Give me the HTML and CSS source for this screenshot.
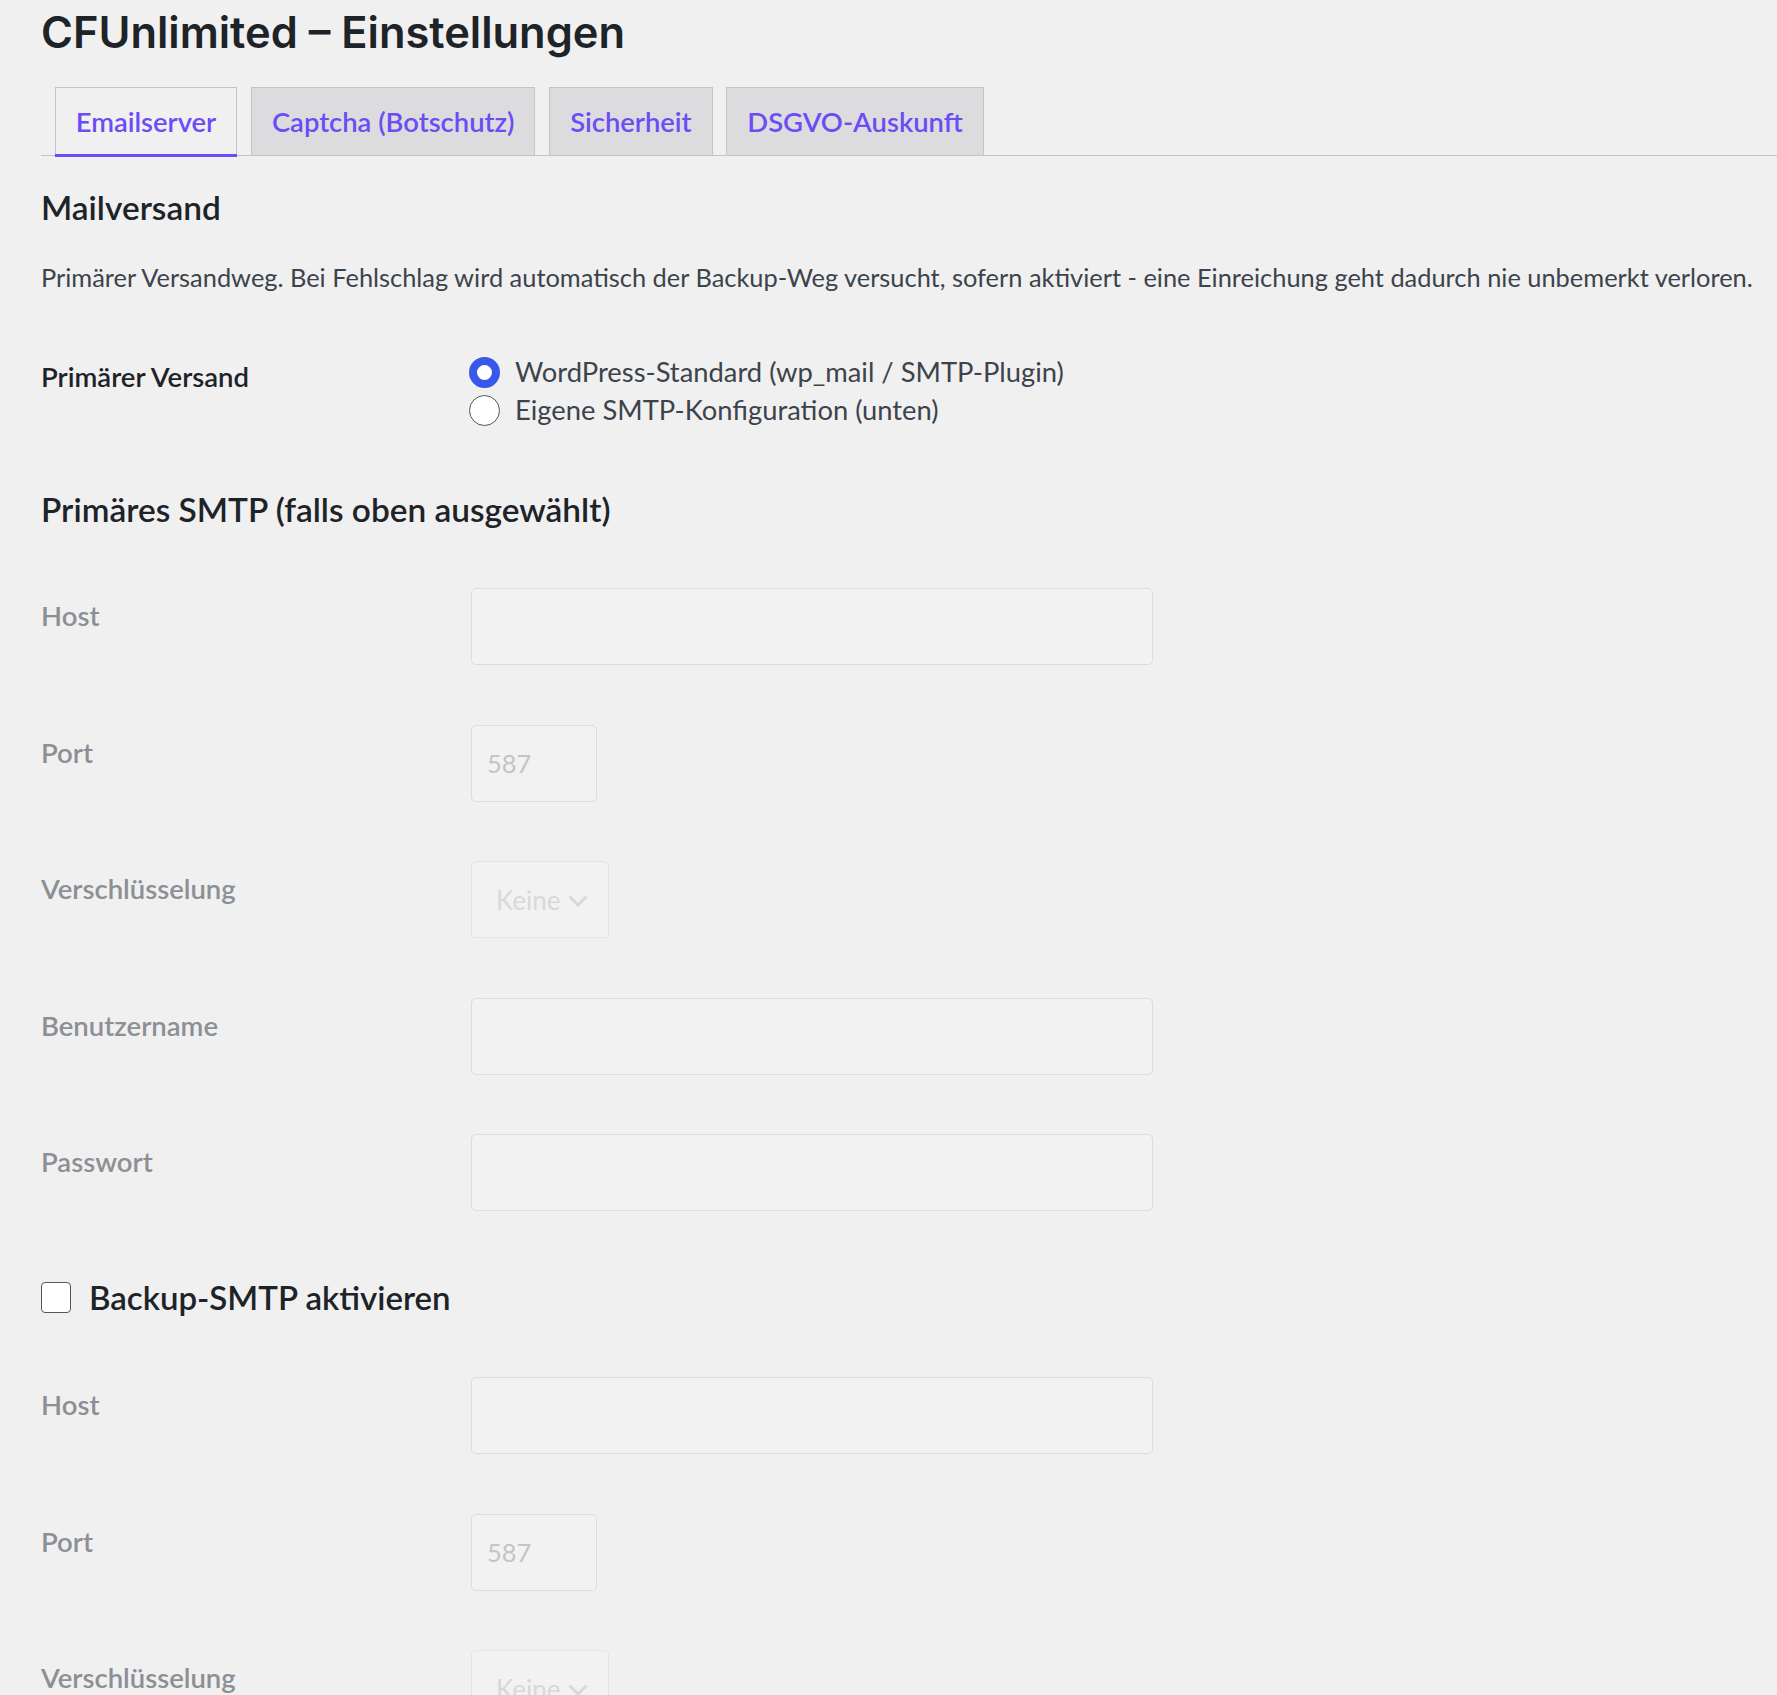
FILE: index.html
```html
<!DOCTYPE html>
<html lang="de">
  <head>
    <meta charset="UTF-8" />
    <meta name="viewport" content="width=device-width, initial-scale=1.0" />
    <title>CFUnlimited – Einstellungen</title>
    <link rel="stylesheet" href="styles.css">
  </head>
  <body>
    <div class="wrap">
      <h1 class="page-title">CFUnlimited – Einstellungen</h1>

      <nav class="nav-tabs">
        <a href="#" class="nav-tab active">Emailserver</a>
        <a href="#" class="nav-tab">Captcha (Botschutz)</a>
        <a href="#" class="nav-tab">Sicherheit</a>
        <a href="#" class="nav-tab">DSGVO-Auskunft</a>
      </nav>

      <h2 class="section-title first">Mailversand</h2>
      <p class="description">Primärer Versandweg. Bei Fehlschlag wird automatisch der Backup-Weg versucht, sofern aktiviert - eine Einreichung geht dadurch nie unbemerkt verloren.</p>

      <div class="form-table">
        <div class="row row-radio">
          <div class="label">Primärer Versand</div>
          <fieldset class="radios">
            <label><input type="radio" name="mode" checked> WordPress-Standard (wp_mail / SMTP-Plugin)</label>
            <label><input type="radio" name="mode"> Eigene SMTP-Konfiguration (unten)</label>
          </fieldset>
        </div>
      </div>

      <h2 class="section-title">Primäres SMTP (falls oben ausgewählt)</h2>

      <div class="form-table disabled smtp-primary">
        <div class="row">
          <label class="label">Host</label>
          <div class="field"><input type="text" class="regular-text" disabled></div>
        </div>
        <div class="row">
          <label class="label">Port</label>
          <div class="field"><input type="text" class="small-text" placeholder="587" disabled></div>
        </div>
        <div class="row">
          <label class="label">Verschlüsselung</label>
          <div class="field">
            <div class="select">
              <select disabled><option>Keine</option></select>
              <svg class="chevron" viewBox="0 0 20 12" width="20" height="12"><path d="M1.5 1.5 L10 10 L18.5 1.5" fill="none" stroke="currentColor" stroke-width="3"/></svg>
            </div>
          </div>
        </div>
        <div class="row">
          <label class="label">Benutzername</label>
          <div class="field"><input type="text" class="regular-text" disabled></div>
        </div>
        <div class="row">
          <label class="label">Passwort</label>
          <div class="field"><input type="password" class="regular-text" disabled></div>
        </div>
      </div>

      <label class="backup-toggle"><input type="checkbox"> Backup-SMTP aktivieren</label>

      <div class="form-table disabled smtp-backup">
        <div class="row">
          <label class="label">Host</label>
          <div class="field"><input type="text" class="regular-text" disabled></div>
        </div>
        <div class="row">
          <label class="label">Port</label>
          <div class="field"><input type="text" class="small-text" placeholder="587" disabled></div>
        </div>
        <div class="row">
          <label class="label">Verschlüsselung</label>
          <div class="field">
            <div class="select">
              <select disabled><option>Keine</option></select>
              <svg class="chevron" viewBox="0 0 20 12" width="20" height="12"><path d="M1.5 1.5 L10 10 L18.5 1.5" fill="none" stroke="currentColor" stroke-width="3"/></svg>
            </div>
          </div>
        </div>
      </div>
    </div>
  </body>
</html>
```
FILE: styles.css
```css
* {
  box-sizing: border-box;
}
html,
body {
  margin: 0;
  padding: 0;
  background-color: #f0f0f1;
}
body {
  color: #3c434a;
  font-family: Lato, "Open Sans", sans-serif;
  font-size: 25.4px;
}
.wrap {
  padding-left: 41px;
}
.page-title {
  margin: 0;
  padding-top: 4px;
  font-family: Inter, sans-serif;
  font-weight: 600;
  font-size: 43.4px;
  line-height: 56px;
  color: #1d2327;
}

/* tabs */
.nav-tabs {
  display: flex;
  align-items: flex-end;
  margin-top: 27px;
  border-bottom: 1px solid #c3c4c7;
}
.nav-tab {
  position: relative;
  margin-left: 13.7px;
  margin-bottom: -1px;
  padding: 9px 20px;
  border: 1px solid #c3c4c7;
  background-color: #dcdcde;
  color: #6b4cf6;
  font-size: 27.4px;
  font-weight: 600;
  line-height: 49px;
  text-decoration: none;
  white-space: nowrap;
}
.nav-tab.active {
  background-color: #f0f0f1;
  border-bottom-color: #f0f0f1;
}
.nav-tab.active::after {
  content: "";
  position: absolute;
  left: -1px;
  right: -1px;
  bottom: -2px;
  height: 3px;
  background-color: #6b4cf6;
}

/* headings + text */
.section-title {
  margin: 28px 0 0;
  font-size: 33.4px;
  font-weight: 600;
  line-height: 46.8px;
  color: #1d2327;
}
.description {
  margin: 27.5px 0 0;
  line-height: 38px;
}

/* form rows */
.form-table {
  margin-top: 25.5px;
}
.form-table .row {
  display: grid;
  grid-template-columns: 430px 1fr;
  padding: 30px 0 29.5px;
}
.form-table .label {
  padding-top: 9px;
  font-size: 27.5px;
  font-weight: 600;
  line-height: 37.5px;
  color: #1d2327;
}
.form-table.disabled .label {
  color: #8c8f94;
}
.row-radio.row {
  padding-bottom: 28px;
}
.row-radio .label {
  padding-top: 5px;
}
.form-table:first-of-type {
  margin-top: 26.6px;
}
.smtp-primary {
  margin-top: 25.5px;
}
.radios {
  margin: 0;
  padding: 0;
  border: 0;
  display: flex;
  flex-direction: column;
}
.radios label {
  display: flex;
  align-items: center;
  gap: 15px;
  margin-left: -2px;
  font-size: 27.35px;
  line-height: 38.5px;
  color: #3c434a;
}
input[type="radio"] {
  appearance: none;
  margin: 0;
  width: 31px;
  height: 31px;
  border-radius: 50%;
  border: 1.5px solid #50575e;
  background-color: #fff;
}
input[type="radio"]:checked {
  border: 8.5px solid #3858e9;
}

/* inputs */
input[type="text"],
input[type="password"],
.select select {
  display: block;
  height: 77px;
  margin: 0;
  padding: 0 15px;
  border: 1px solid #dcdcde;
  border-radius: 5px;
  background-color: #f2f2f3;
  font-family: inherit;
  font-size: 25.4px;
  color: #a7aaad;
}
.regular-text {
  width: 682px;
}
.small-text {
  width: 126px;
}
input::placeholder {
  color: #c3c4c7;
}
.select {
  position: relative;
  width: 138px;
}
.select select {
  appearance: none;
  width: 100%;
  padding: 0 24px;
  border-color: #e4e4e6;
  font-size: 26px;
  color: #d8d8da;
  opacity: 1;
}
.select .chevron {
  position: absolute;
  right: 21px;
  top: 34px;
  color: #d8d8da;
}

/* backup toggle */
.backup-toggle {
  display: flex;
  align-items: center;
  gap: 18px;
  margin-top: 33.5px;
  font-size: 33px;
  font-weight: 600;
  line-height: 46px;
  color: #1d2327;
}
input[type="checkbox"] {
  appearance: none;
  margin: 0;
  width: 30px;
  height: 31px;
  border: 1.5px solid #50575e;
  border-radius: 4px;
  background-color: #fff;
}
.smtp-backup {
  margin-top: 27px;
}
```
